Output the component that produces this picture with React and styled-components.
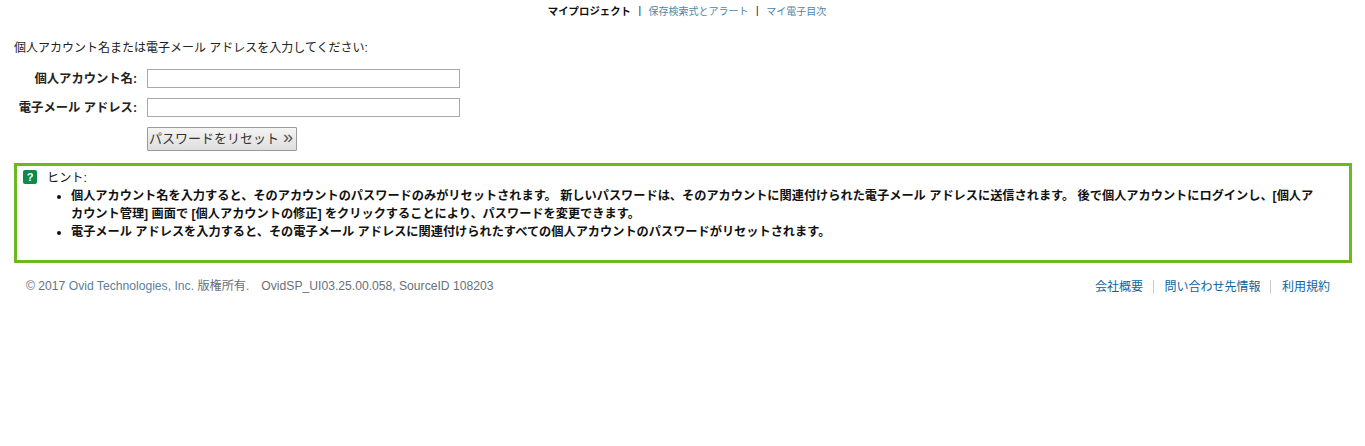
import React from "react";
import styled, { createGlobalStyle } from "styled-components";

const Global = createGlobalStyle`
  html, body { margin: 0; padding: 0; background: #fff; }
  body { font-family: "Liberation Sans", "Noto Sans CJK JP", sans-serif; font-size: 12px; color: #222; }
`;

const Page = styled.div`
  width: 1365px;
  height: 446px;
  padding: 0 14px;
  box-sizing: border-box;
  overflow: hidden;
`;

const TopNav = styled.nav`
  height: 21px;
  display: flex;
  justify-content: center;
  align-items: center;
  font-size: 10px;
  padding-left: 9px;
  box-sizing: border-box;
`;

const NavItem = styled.span`
  color: ${(p) => (p.$active ? "#111" : "#4f86a8")};
  font-weight: ${(p) => (p.$active ? 700 : 400)};
  font-size: ${(p) => (p.$active ? "10.4px" : "10px")};
`;

const NavSep = styled.span`
  margin: 0 7.5px;
  color: #111;
`;

const Intro = styled.p`
  margin: 19px 0 0;
  font-size: 12px;
  line-height: 16px;
  color: #222;
`;

const Form = styled.div`
  margin-top: 13px;
  display: grid;
  grid-template-columns: 123px 313px;
  column-gap: 10px;
  row-gap: 10px;
  align-items: center;
`;

const Label = styled.label`
  text-align: right;
  font-weight: 700;
  font-size: 12.3px;
  color: #222;
  margin-top: -1px;
`;

const Field = styled.input`
  width: 313px;
  height: 19px;
  box-sizing: border-box;
  border: 1px solid #a9a9a9;
  background: #fff;
  padding: 0;
`;

const Reset = styled.button`
  grid-column: 2;
  justify-self: start;
  width: 150px;
  height: 24px;
  padding: 0 0 3px 1px;
  box-sizing: border-box;
  border: 1px solid #9a9a9a;
  border-radius: 1px;
  background: linear-gradient(#f4f4f4, #dedede);
  font-family: inherit;
  font-size: 13px;
  color: #333;
  text-align: left;
  white-space: nowrap;
`;

const Chevrons = styled.span`
  font-size: 18px;
  line-height: 14px;
  margin-left: 4px;
  font-weight: 400;
  color: #555;
`;

const Hint = styled.section`
  margin-top: 12px;
  width: 1338px;
  height: 100px;
  box-sizing: border-box;
  border: 3px solid #6cb81e;
  padding: 2px 6px 0;
  font-size: 12.2px;
  color: #111;
`;

const HintHead = styled.div`
  display: flex;
  align-items: center;
  height: 17px;
  gap: 10px;
`;

const HelpIcon = styled.span`
  width: 14px;
  height: 14px;
  border-radius: 2px;
  background: #0e8a4b;
  color: #fff;
  font-weight: 700;
  font-size: 11px;
  line-height: 14px;
  text-align: center;
`;

const HintList = styled.ul`
  margin: 2px 0 0;
  padding: 0 20px 0 48px;
  font-weight: 700;
  line-height: 18px;
`;

const Footer = styled.footer`
  margin-top: 15px;
  width: 1338px;
  padding: 0 22px 0 12px;
  box-sizing: border-box;
  display: flex;
  justify-content: space-between;
  align-items: center;
  font-size: 12px;
  line-height: 17px;
`;

const Copy = styled.span`
  color: #68707a;
  font-size: 12.15px;
`;

const Legal = styled.a`
  color: #5b7f9c;
`;

const Build = styled.span`
  margin-left: 12px;
`;

const Links = styled.div`
  display: flex;
  align-items: center;
`;

const FootLink = styled.a`
  color: #0a659e;
  padding: 0 10px 0 ${(p) => (p.$first ? "0" : "10.5px")};
  border-left: ${(p) => (p.$first ? "none" : "1px solid #ccc")};
  line-height: 14px;
  &:last-child { padding-right: 0; }
`;

export default function App() {
  return (
    <Page>
      <Global />
      <TopNav>
        <NavItem $active>マイプロジェクト</NavItem>
        <NavSep>|</NavSep>
        <NavItem>保存検索式とアラート</NavItem>
        <NavSep>|</NavSep>
        <NavItem>マイ電子目次</NavItem>
      </TopNav>
      <Intro>個人アカウント名または電子メール アドレスを入力してください:</Intro>
      <Form>
        <Label>個人アカウント名:</Label>
        <Field />
        <Label>電子メール アドレス:</Label>
        <Field />
        <Reset>パスワードをリセット<Chevrons>»</Chevrons></Reset>
      </Form>
      <Hint>
        <HintHead>
          <HelpIcon>?</HelpIcon>
          <span>ヒント:</span>
        </HintHead>
        <HintList>
          <li>
            個人アカウント名を入力すると、そのアカウントのパスワードのみがリセットされます。 新しいパスワードは、そのアカウントに関連付けられた電子メール アドレスに送信されます。 後で個人アカウントにログインし、[個人アカウント管理] 画面で [個人アカウントの修正] をクリックすることにより、パスワードを変更できます。
          </li>
          <li>電子メール アドレスを入力すると、その電子メール アドレスに関連付けられたすべての個人アカウントのパスワードがリセットされます。</li>
        </HintList>
      </Hint>
      <Footer>
        <Copy>
          © 2017 <Legal>Ovid Technologies, Inc.</Legal> 版権所有.<Build>OvidSP_UI03.25.00.058, SourceID 108203</Build>
        </Copy>
        <Links>
          <FootLink $first>会社概要</FootLink>
          <FootLink>問い合わせ先情報</FootLink>
          <FootLink>利用規約</FootLink>
        </Links>
      </Footer>
    </Page>
  );
}
